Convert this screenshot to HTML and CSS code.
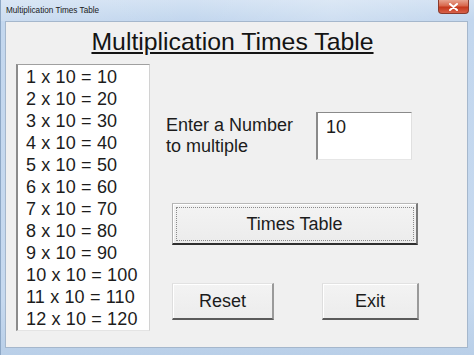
FILE: index.html
```html
<!DOCTYPE html>
<html>
<head>
<meta charset="utf-8">
<link rel="stylesheet" href="styles.css">
</head>
<body>
<div class="window">
  <div class="titlebar">
    <span class="title">Multiplication Times Table</span>
    <div class="close"><svg width="9" height="8" viewBox="0 0 9 8"><path d="M1 1 L8 7 M8 1 L1 7" stroke="#fff" stroke-width="2" stroke-linecap="round"/></svg></div>
  </div>
  <div class="client">
    <h1 class="heading">Multiplication Times Table</h1>
    <div class="main">
      <ul class="listbox">
        <li>1 x 10 = 10</li>
        <li>2 x 10 = 20</li>
        <li>3 x 10 = 30</li>
        <li>4 x 10 = 40</li>
        <li>5 x 10 = 50</li>
        <li>6 x 10 = 60</li>
        <li>7 x 10 = 70</li>
        <li>8 x 10 = 80</li>
        <li>9 x 10 = 90</li>
        <li>10 x 10 = 100</li>
        <li>11 x 10 = 110</li>
        <li>12 x 10 = 120</li>
      </ul>
      <div class="controls">
        <div class="input-row">
          <div class="label">Enter a Number<br>to multiple</div>
          <div class="textbox">10</div>
        </div>
        <button class="btn btn-wide">Times Table</button>
        <div class="btn-row">
          <button class="btn btn-reset">Reset</button>
          <button class="btn btn-exit">Exit</button>
        </div>
      </div>
    </div>
  </div>
</div>
</body>
</html>
```
FILE: styles.css
```css
html, body {
  margin: 0;
  padding: 0;
}
body {
  width: 474px;
  height: 355px;
  overflow: hidden;
  font-family: "Liberation Sans", Arial, sans-serif;
  color: #1c1c1c;
}
.window {
  box-sizing: border-box;
  width: 474px;
  height: 355px;
  display: flex;
  flex-direction: column;
  background: linear-gradient(to bottom, #d3e2f3 0px, #c3d7ee 20px, #c6d9ef 300px, #b9cfe8 355px);
  border-left: 1px solid #8ea8c6;
}
.titlebar {
  height: 21px;
  display: flex;
  align-items: flex-start;
  flex-shrink: 0;
  background: linear-gradient(to right, rgba(255,255,255,0.15), rgba(255,255,255,0) 40%, rgba(255,255,255,0.2) 70%, rgba(255,255,255,0));
}
.title {
  font-size: 8.2px;
  color: #1a1a1a;
  margin-left: 5px;
  margin-top: 6px;
  line-height: 10px;
}
.close {
  margin-left: auto;
  margin-right: 5px;
  width: 31px;
  height: 14px;
  box-sizing: border-box;
  border: 1px solid #8a3a2c;
  border-top: none;
  border-radius: 0 0 4px 4px;
  background: linear-gradient(to bottom, #e7a38f 0%, #d8674c 45%, #c5381c 55%, #d7614a 100%);
  display: flex;
  align-items: center;
  justify-content: center;
}
.client {
  box-sizing: border-box;
  margin: 0 6px 7px 4px;
  flex: 1;
  background: #f0f0f0;
  border: 1px solid #a5b7cc;
}
.heading {
  margin: 0;
  padding-top: 6px;
  padding-right: 8px;
  font-size: 24.8px;
  line-height: 28px;
  font-weight: normal;
  text-align: center;
  text-decoration: underline;
  text-decoration-thickness: 2px;
  text-underline-offset: 2px;
  color: #141414;
}
.main {
  display: flex;
  margin-top: 8px;
  margin-left: 10px;
}
.listbox {
  box-sizing: border-box;
  list-style: none;
  margin: 0;
  width: 134px;
  height: 267px;
  padding: 1px 0 0 8px;
  background: #fff;
  border-top: 1px solid #a0a0a0;
  border-left: 2px solid #8c8c8c;
  border-right: 1px solid #d2d2d2;
  border-bottom: 1px solid #e4e4e4;
  font-size: 18px;
  line-height: 22px;
  letter-spacing: 0.15px;
}
.controls {
  margin-left: 16px;
  padding-top: 48px;
  display: flex;
  flex-direction: column;
  align-items: flex-start;
}
.input-row {
  display: flex;
  align-items: flex-start;
}
.label {
  width: 150px;
  margin-top: 3px;
  font-size: 18px;
  line-height: 21px;
}
.textbox {
  box-sizing: border-box;
  width: 96px;
  height: 48px;
  background: #fff;
  border-top: 1px solid #8a8a8a;
  border-left: 2px solid #8a8a8a;
  border-right: 1px solid #e0e0e0;
  border-bottom: 1px solid #e6e6e6;
  padding: 3px 0 0 8px;
  font-size: 18px;
  line-height: 22px;
}
.btn {
  box-sizing: border-box;
  font-family: "Liberation Sans", Arial, sans-serif;
  font-size: 18px;
  line-height: 22px;
  color: #1c1c1c;
  background: linear-gradient(to bottom, #f3f3f3, #ececec);
  border-style: solid;
  border-width: 1px 2px 2px 1px;
  border-color: #e2e2e2 #9a9a9a #5a5a5a #dedede;
  box-shadow: inset 1px 1px 0 #ffffff;
  padding: 0;
  margin: 0;
  display: flex;
  align-items: center;
  justify-content: center;
}
.btn-wide {
  position: relative;
  margin-top: 43px;
  margin-left: 6px;
  width: 246px;
  height: 42px;
  border-color: #b8b8b8 #7a7a7a #2e2e2e #b0b0b0;
}
.btn-wide::after {
  content: "";
  position: absolute;
  left: 3px;
  top: 3px;
  right: 2px;
  bottom: 2px;
  border: 1px dotted #8a8a8a;
}
.btn-row {
  display: flex;
  margin-top: 38px;
  margin-left: 6px;
  gap: 48px;
}
.btn-reset {
  width: 102px;
  height: 37px;
}
.btn-exit {
  width: 97px;
  height: 37px;
}
```
